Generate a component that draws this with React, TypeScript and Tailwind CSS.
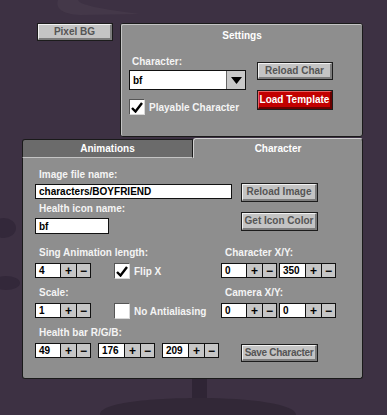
import React from 'react'

const font = { fontFamily: '"Liberation Sans", Arial, sans-serif' }

function Btn({ label, className = '', red = false }: { label: string; className?: string; red?: boolean }) {
  return (
    <div
      className={`flex items-center justify-center whitespace-nowrap border border-[#1c1c1c] text-[10px] font-bold leading-none ${
        red ? 'bg-[#c20000] text-white' : 'bg-[#c4c4c4] text-[#555555]'
      } ${className}`}
    >
      <div
        className={`flex h-full w-full items-center justify-center border-t border-l border-b-2 border-r-2 ${
          red ? 'border-t-[#e86060] border-l-[#e86060] border-b-[#6a0000] border-r-[#6a0000]' : 'border-t-[#f2f2f2] border-l-[#f2f2f2] border-b-[#7c7c7c] border-r-[#7c7c7c]'
        }`}
      >
        {label}
      </div>
    </div>
  )
}

function Stepper({ value, w = 'w-[26px]' }: { value: string; w?: string }) {
  return (
    <div className="flex h-[15px] text-[10px] font-bold leading-none text-black">
      <div className={`flex items-center border border-[#111] bg-white pl-[3px] ${w}`}>{value}</div>
      <div className="flex w-[16px] items-center justify-center border-y border-r border-[#111] bg-[#c6c6c6] text-[12px]">+</div>
      <div className="flex w-[14px] items-center justify-center border-y border-r border-[#111] bg-[#c6c6c6] text-[12px]">−</div>
    </div>
  )
}

function Check({ checked }: { checked: boolean }) {
  return (
    <div className="flex h-[16px] w-[16px] items-center justify-center border border-t-[#555] border-l-[#555] border-b-[#d8d8d8] border-r-[#d8d8d8] bg-white">
      {checked && (
        <svg width="12" height="11" viewBox="0 0 12 11">
          <path d="M1 6 L4.5 9.5 L11 1" fill="none" stroke="#000" strokeWidth="2.4" />
        </svg>
      )}
    </div>
  )
}

function Label({ children, className = '' }: { children: React.ReactNode; className?: string }) {
  return <div className={`h-[12px] whitespace-nowrap text-[10px] font-bold leading-[12px] text-[#f4f4f4] ${className}`}>{children}</div>
}

export default function App() {
  return (
    <div className="relative h-[415px] w-[387px] overflow-hidden bg-[#3d3143]" style={font}>
      <svg className="absolute inset-0" width="387" height="415" viewBox="0 0 387 415">
        <path d="M58 0 C55 8 62 14 80 15 L140 14 C110 10 80 6 78 0 Z" fill="#443849" />
        <ellipse cx="4" cy="228" rx="12" ry="10" fill="#33283a" />
        <ellipse cx="6" cy="283" rx="14" ry="7" fill="#33283a" />
        <rect x="192" y="375" width="15" height="30" fill="#2f2535" />
        <path d="M100 415 C98 403 150 398 200 398 C250 398 296 404 296 415 Z" fill="#322837" />
      </svg>

      <div className="relative flex flex-col pt-[23px]">
        {/* top row */}
        <div className="flex pl-[37px]">
          <Btn label="Pixel BG" className="h-[18px] w-[76px]" />
          <div className="ml-[7px] h-[114px] w-[243px] rounded-[3px] border border-[#1a1a1a] bg-[#8e8e8e]">
            <div className="h-full rounded-[2px] border-t border-l border-[#c4c4c4]">
              <div className="flex h-[20px] items-center justify-center text-[10px] font-bold text-white">Settings</div>
              <div className="mt-[11px] flex pl-[7px]">
                <div className="w-[117px]">
                  <Label className="pl-[3px]">Character:</Label>
                  <div className="mt-[2px] flex h-[20px] border border-[#111] bg-white">
                    <div className="flex flex-1 items-center pl-[3px] text-[10px] font-bold text-black">bf</div>
                    <div className="flex w-[19px] items-center justify-center border-l border-[#666] bg-[#c8c8c8]">
                      <svg width="11" height="7" viewBox="0 0 11 7">
                        <path d="M0 0 H11 L5.5 7 Z" fill="#000" />
                      </svg>
                    </div>
                  </div>
                  <div className="mt-[9px] flex items-center">
                    <Check checked />
                    <span className="ml-[4px] text-[10px] font-bold text-[#f4f4f4]">Playable Character</span>
                  </div>
                </div>
                <div className="ml-[11px] flex flex-col">
                  <Btn label="Reload Char" className="mt-[6px] h-[18px] w-[76px]" />
                  <Btn label="Load Template" red className="mt-[10px] h-[20px] w-[76px]" />
                </div>
              </div>
            </div>
          </div>
        </div>

        {/* tabs panel */}
        <div className="ml-[22px] mt-[1px] w-[341px]">
          <div className="flex h-[20px] items-end">
            <div className="flex h-[19px] w-[171px] items-center justify-center rounded-tl-[3px] border border-[#1a1a1a] border-b-[#c4c4c4] bg-[#6b6b6b] text-[10px] font-bold text-white">
              Animations
            </div>
            <div className="flex h-[20px] w-[170px] items-center justify-center rounded-t-[3px] border border-b-0 border-[#1a1a1a] border-t-[#d0d0d0] border-l-[#d0d0d0] bg-[#8e8e8e] text-[10px] font-bold text-white">
              Character
            </div>
          </div>
          <div className="h-[221px] rounded-b-[3px] border border-t-0 border-[#1a1a1a] bg-[#8e8e8e] pl-[12px] pt-[11px]">
            {/* image file */}
            <div className="flex items-start">
              <div className="w-[206px]">
                <Label className="pl-[4px]">Image file name:</Label>
                <div className="mt-[3px] flex h-[15px] w-[197px] items-center border border-[#111] bg-white pl-[3px] text-[10px] font-bold text-black">
                  characters/BOYFRIEND
                </div>
              </div>
              <Btn label="Reload Image" className="mt-[14px] h-[19px] w-[77px]" />
            </div>
            {/* health icon */}
            <div className="mt-[1px] flex items-start">
              <div className="w-[206px]">
                <Label className="pl-[4px]">Health icon name:</Label>
                <div className="mt-[3px] flex h-[16px] w-[74px] items-center border border-[#111] bg-white pl-[3px] text-[10px] font-bold text-black">
                  bf
                </div>
              </div>
              <Btn label="Get Icon Color" className="mt-[9px] h-[19px] w-[77px]" />
            </div>
            {/* sing / flip / char pos */}
            <div className="mt-[13px] grid grid-cols-[79px_107px_1fr]">
              <Label className="pl-[4px]">Sing Animation length:</Label>
              <div />
              <Label className="pl-[4px]">Character X/Y:</Label>
              <div className="mt-[4px]">
                <Stepper value="4" />
              </div>
              <div className="mt-[4px] flex items-center">
                <Check checked />
                <span className="ml-[4px] text-[10px] font-bold text-[#f4f4f4]">Flip X</span>
              </div>
              <div className="mt-[4px] flex gap-[2px]">
                <Stepper value="0" />
                <Stepper value="350" w="w-[27px]" />
              </div>
            </div>
            {/* scale / antialias / camera */}
            <div className="mt-[8px] grid grid-cols-[79px_107px_1fr]">
              <Label className="pl-[4px]">Scale:</Label>
              <div />
              <Label className="pl-[4px]">Camera X/Y:</Label>
              <div className="mt-[4px]">
                <Stepper value="1" />
              </div>
              <div className="mt-[4px] flex items-center">
                <Check checked={false} />
                <span className="ml-[4px] text-[10px] font-bold text-[#f4f4f4]">No Antialiasing</span>
              </div>
              <div className="mt-[4px] flex gap-[2px]">
                <Stepper value="0" />
                <Stepper value="0" w="w-[27px]" />
              </div>
            </div>
            {/* health bar */}
            <div className="mt-[8px]">
              <Label className="pl-[4px]">Health bar R/G/B:</Label>
              <div className="mt-[4px] flex items-start">
                <Stepper value="49" />
                <div className="ml-[7px]">
                  <Stepper value="176" w="w-[27px]" />
                </div>
                <div className="ml-[7px]">
                  <Stepper value="209" w="w-[27px]" />
                </div>
                <Btn label="Save Character" className="ml-[22px] mt-[1px] h-[18px] w-[77px] tracking-[-0.3px]" />
              </div>
            </div>
          </div>
        </div>
      </div>
    </div>
  )
}
